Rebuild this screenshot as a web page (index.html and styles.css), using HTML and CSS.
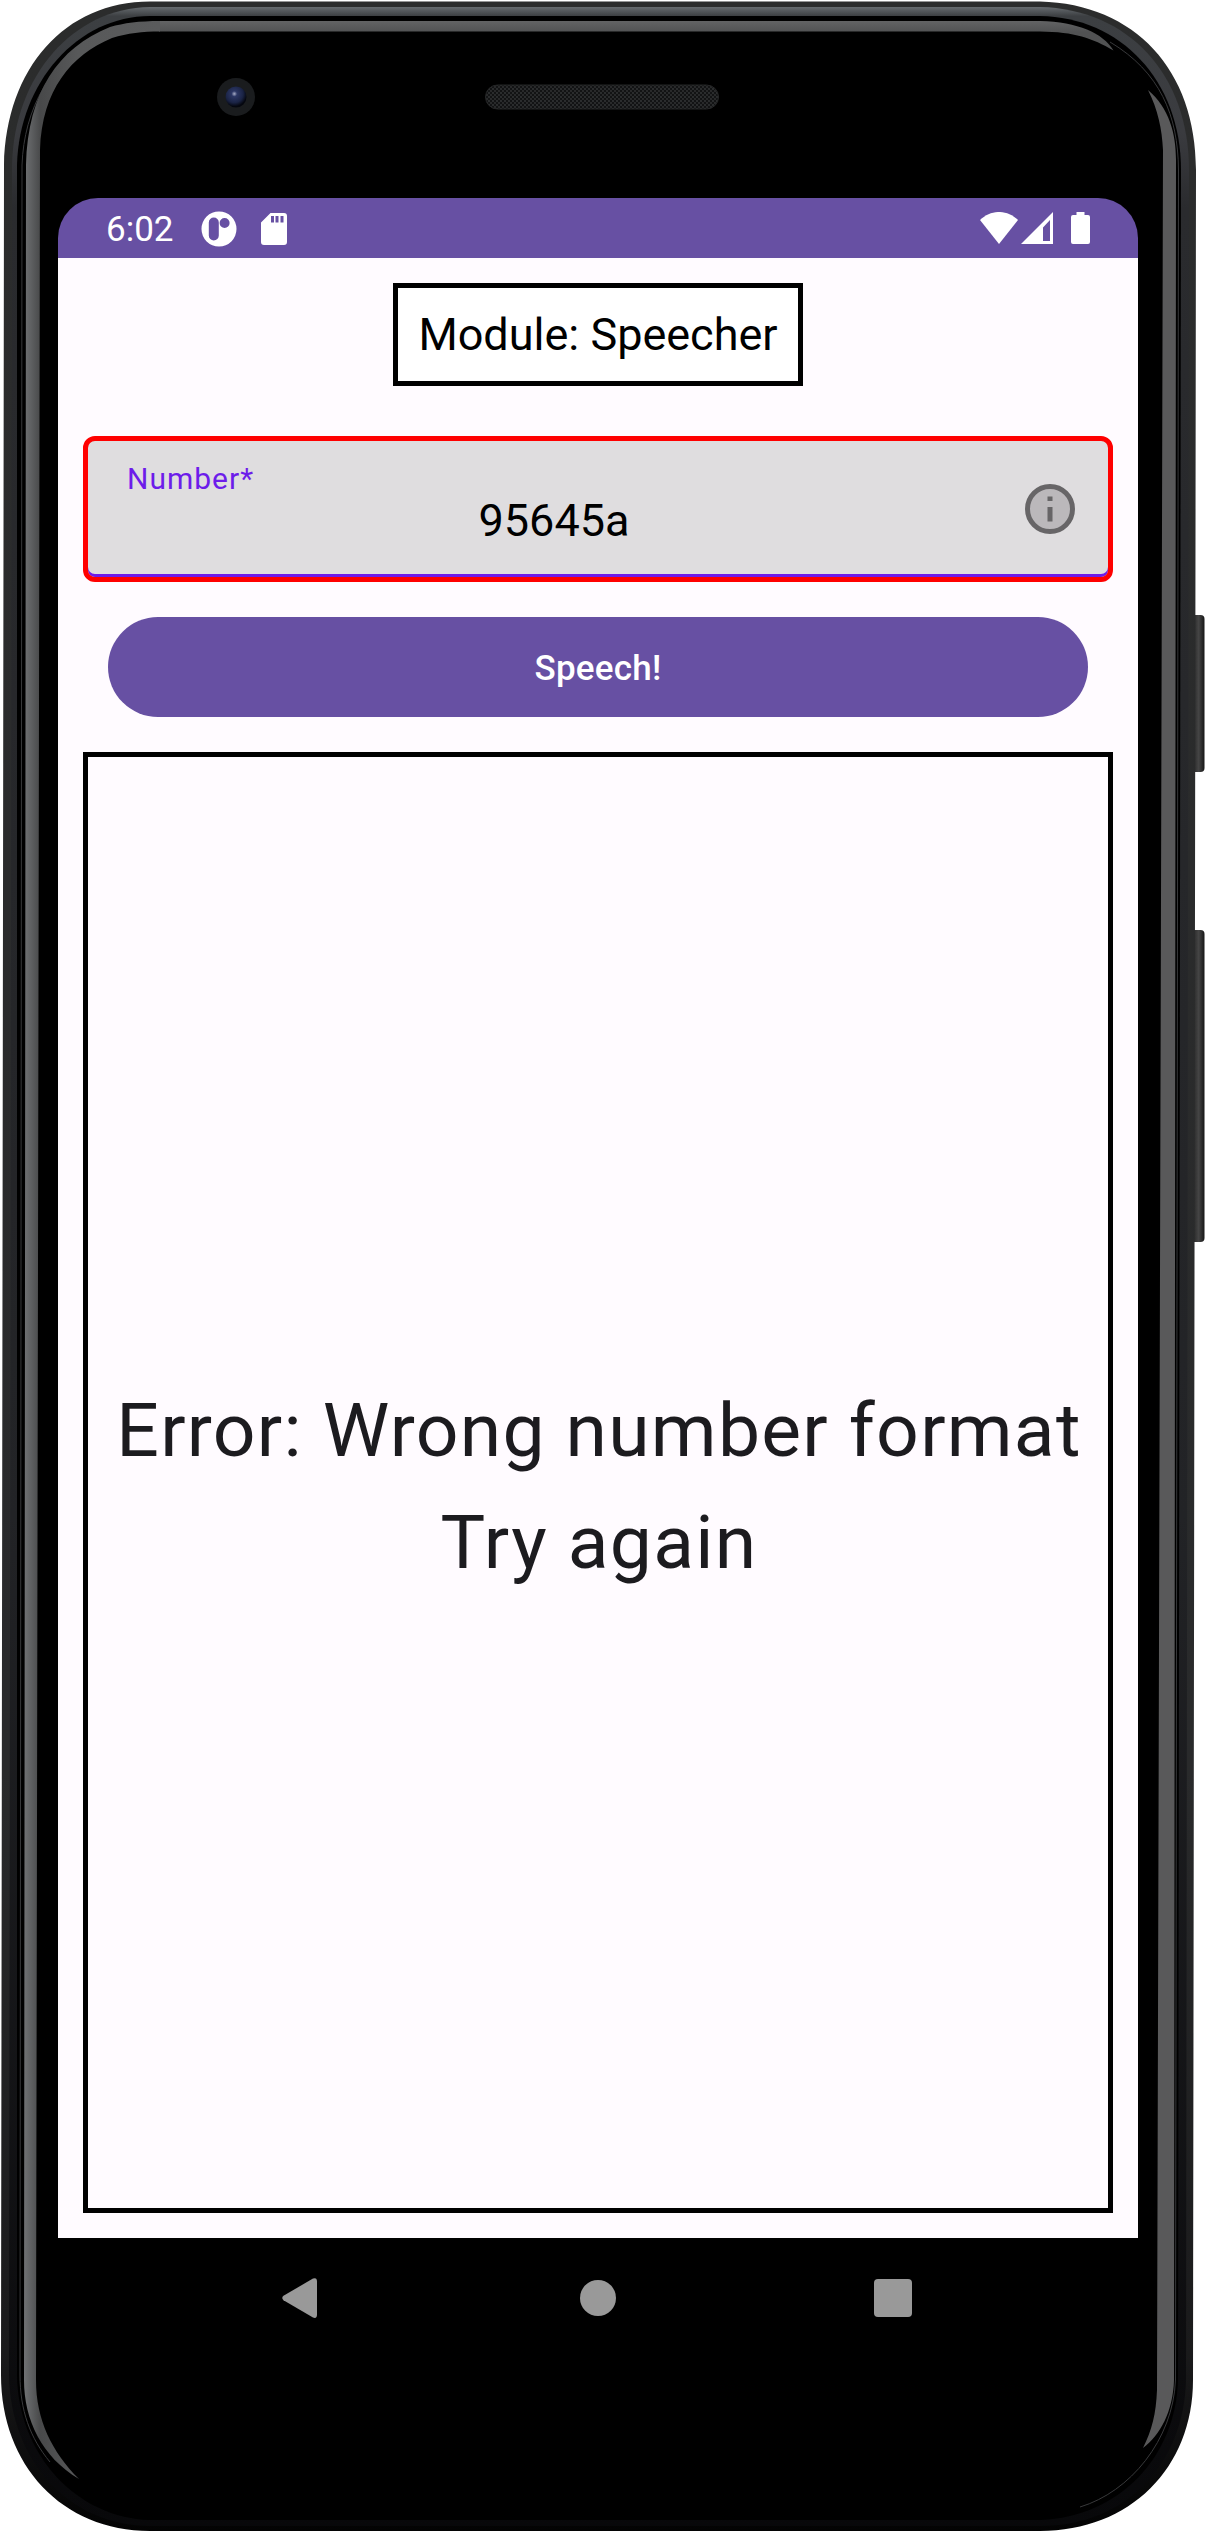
FILE: index.html
```html
<!DOCTYPE html>
<html lang="en">
<head>
<meta charset="utf-8">
<title>Module: Speecher</title>
<link rel="stylesheet" href="styles.css">
</head>
<body>
<main class="phone">
  <svg class="bezel" viewBox="0 0 1206 2533" aria-hidden="true">
    <defs>
      <linearGradient id="rim" x1="0" y1="0" x2="0" y2="1">
        <stop offset="0" stop-color="#2b2c2c"/><stop offset=".7" stop-color="#292a2b"/><stop offset=".93" stop-color="#1a1a1b"/><stop offset="1" stop-color="#030303"/>
      </linearGradient>
      <linearGradient id="band" gradientUnits="userSpaceOnUse" x1="0" y1="6" x2="0" y2="2525">
        <stop offset="0" stop-color="#6b7074"/><stop offset=".004" stop-color="#3c3f42"/><stop offset=".05" stop-color="#3a3b3f"/><stop offset=".08" stop-color="#2a2b2e"/><stop offset=".6" stop-color="#222326"/><stop offset="1" stop-color="#08080a"/>
      </linearGradient>
      <linearGradient id="shineL" gradientUnits="userSpaceOnUse" x1="24" y1="0" x2="160" y2="0">
        <stop offset="0" stop-color="#707274"/><stop offset=".12" stop-color="#48494a"/><stop offset=".4" stop-color="#58595a"/><stop offset="1" stop-color="#5a5b5c"/>
      </linearGradient>
      <linearGradient id="shineT" gradientUnits="userSpaceOnUse" x1="0" y1="20" x2="0" y2="32">
        <stop offset="0" stop-color="#646566"/><stop offset="1" stop-color="#515253"/>
      </linearGradient>
      <linearGradient id="key" x1="0" y1="0" x2="1" y2="0">
        <stop offset="0" stop-color="#171717"/><stop offset=".6" stop-color="#454545"/><stop offset="1" stop-color="#161616"/>
      </linearGradient>
      <radialGradient id="lens" cx=".42" cy=".35" r=".6">
        <stop offset="0" stop-color="#a9aec8"/><stop offset=".22" stop-color="#2c3765"/><stop offset=".7" stop-color="#1a2344"/><stop offset="1" stop-color="#05070f"/>
      </radialGradient>
      <pattern id="mesh" width="4" height="4" patternUnits="userSpaceOnUse">
        <rect width="4" height="4" fill="#121314"/><circle cx="1" cy="1" r=".9" fill="#363839"/><circle cx="3" cy="3" r=".9" fill="#323334"/>
      </pattern>
    </defs>
    <rect x="1190" y="615" width="14.5" height="157" rx="4" fill="url(#key)"/>
    <rect x="1190" y="930" width="14.5" height="312" rx="4" fill="url(#key)"/>
    <path fill="url(#rim)" d="M150 1.500H1040C1135 4 1196 70 1196 170L1193 2380C1193 2468 1130 2531 1040 2531H150C62 2531 1 2465 1 2375L4 165C6 68 65 1.500 150 1.500Z"/>
    <path fill="url(#band)" d="M150 7H1040C1128 9 1189 74 1189 170L1186 2380C1184 2464 1126 2526 1040 2526H150C69 2526 10 2460 9 2375L12 165C14 76 73 8 150 7Z"/>
    <path d="M150 16H1040C1120 17 1181 80 1181 170L1178 2380C1176 2456 1120 2517 1040 2520H150C76 2518 18 2454 17 2375L17 165C19 82 78 16 150 16Z"/>
    <path fill="none" stroke="#38393b" stroke-width="1" d="M1110 42C1160 72 1178 115 1178.500 170L1175.500 2380C1173 2440 1130 2492 1080 2507M50 2462C30 2438 20 2410 20 2375L22 165C24 110 50 58 105 32"/>
    <path fill="url(#shineT)" d="M159 21H1040C1078 22 1103 33 1113.500 50.500C1092 38 1075 32 1040 31.500H159Z"/>
    <path fill="url(#shineL)" d="M110 27C58 48 28 92 26 165L24 2380C24 2420 42 2457 79 2479C52 2452 36 2420 36 2380L40 150C42 90 71 55 112 38C128 33 142 31.500 160 31.500V21C139 21 124 23 110 27Z"/>
    <path fill="#59595a" d="M1148 90C1169 108 1176 133 1176 160L1174 2380C1173 2412 1160 2435 1143 2448C1152 2430 1156 2414 1157 2390L1163 150C1162 129 1158 110 1148 90Z"/>
    <circle cx="236" cy="97" r="19" fill="#1a1c1e"/>
    <circle cx="236" cy="97" r="10.500" fill="url(#lens)"/>
    <rect x="485.500" y="85" width="233" height="24" rx="12" fill="url(#mesh)" stroke="#252627"/>
  </svg>

  <div class="screen">
    <header class="status">
      <span class="clock">6:02</span>
      <svg class="status-app" width="36" height="36" viewBox="0 0 36 36"><path fill="#fff" fill-rule="evenodd" d="M18 .5a17.500 17.500 0 1 0 0 35a17.500 17.500 0 1 0 0-35ZM12.800 6.500a5 5 0 0 1 5 5V24.500a5 5 0 0 1-10 0V11.500a5 5 0 0 1 5-5ZM23.600 7a5 5 0 1 1 0 10a5 5 0 1 1 0-10Z"/></svg>
      <svg class="status-sd" width="26" height="32" viewBox="0 0 26 32"><path fill="#fff" fill-rule="evenodd" d="M9.500 0H23a3 3 0 0 1 3 3V29a3 3 0 0 1-3 3H3a3 3 0 0 1-3-3V9.500ZM10 3V9.500H13V3ZM14.500 3V9.500H17.500V3ZM19.500 3V9.500H22.500V3Z"/></svg>
      <span class="spacer"></span>
      <svg class="status-wifi" width="38" height="32" viewBox="0 0 38 32"><path fill="#fff" d="M0 8C11-2.700 27-2.700 38 8L19 32Z"/></svg>
      <svg class="status-signal" width="32" height="32" viewBox="0 0 32 32"><path fill="#fff" fill-rule="evenodd" d="M32 0V32H0ZM29 8L22 15.500V29H29Z"/></svg>
      <svg class="status-battery" width="19" height="32" viewBox="0 0 19 32"><path fill="#fff" d="M5.500 0H13.500V3H17a2 2 0 0 1 2 2V30a2 2 0 0 1-2 2H2a2 2 0 0 1-2-2V5a2 2 0 0 1 2-2H5.500Z"/></svg>
    </header>

    <section class="app">
      <h1 class="title">Module: Speecher</h1>
      <div class="field">
        <div class="field-text">
          <label class="field-label">Number*</label>
          <span class="field-value">95645a</span>
        </div>
        <svg class="info" width="50" height="50" viewBox="0 0 50 50"><circle cx="25" cy="25" r="22.500" fill="#bbb8bb" stroke="#676567" stroke-width="5"/><path fill="#676567" d="M22.500 12.500h5v4.500h-5ZM22.500 23h5v14.500h-5Z"/></svg>
      </div>
      <button class="action" type="button">Speech!</button>
      <div class="output"><p class="message">Error: Wrong number format<br>Try again</p></div>
    </section>

    <nav class="navbar">
      <svg class="nav-back" width="36" height="40" viewBox="0 0 36 40"><path fill="#999" d="M1.500 17.800L31 .5Q35 -1 35 3.500V36.500Q35 41 31 39.500L1.500 22.200Q-1 20 1.500 17.800Z"/></svg>
      <svg width="38" height="38" viewBox="0 0 38 38"><circle cx="19" cy="19" r="18" fill="#999"/></svg>
      <svg width="38" height="38" viewBox="0 0 38 38"><rect width="38" height="38" rx="4" fill="#999"/></svg>
    </nav>
  </div>
</main>
</body>
</html>
```
FILE: styles.css
```css
* { box-sizing: border-box; }
body { margin: 0; background: #fff; font-family: Roboto, sans-serif; }
svg { display: block; flex: none; }

.phone { position: relative; width: 1206px; height: 2533px; padding: 198px 68px 0 58px; overflow: hidden; }
.bezel { position: absolute; left: 0; top: 0; width: 1206px; height: 2533px; }

.screen { position: relative; width: 1080px; height: 2160px; display: flex; flex-direction: column; border-radius: 40px; overflow: hidden; background: #000; }

.status { height: 60px; display: flex; align-items: center; padding: 0 48px; background: #6750a3; color: #fff; }
.clock { width: 95px; font-size: 35px; line-height: 60px; padding-top: 3px; }
.status-app { margin-top: 1px; }
.status-sd { margin-left: 24px; margin-top: 1px; }
.spacer { flex: 1; }
.status-wifi { margin-bottom: 1px; }
.status-signal { margin-left: 3px; margin-bottom: 1px; }
.status-battery { margin-left: 18px; }

.app { height: 1980px; display: flex; flex-direction: column; padding: 25px; background: #fffbff; }
.title { align-self: center; width: 410px; height: 103px; margin: 0 0 50px; border: 5px solid #000; background: #fff; color: #000; font-size: 45px; font-weight: 400; line-height: 93px; text-align: center; }

.field { height: 146px; display: flex; align-items: center; padding-right: 33px; border: 5px solid red; border-radius: 12px; background: #dfdddf; box-shadow: inset 0 -3px #6d1cea; }
.field-text { flex: 1; display: flex; flex-direction: column; padding: 0 0 11px 39px; }
.field-label { color: #6d1cea; font-size: 30px; line-height: 35px; letter-spacing: 1px; }
.field-value { margin-right: 44px; color: #000; font-size: 45px; line-height: 50px; text-align: center; }

.action { height: 100px; margin: 35px 25px; padding: 4px 0 0; border: 0; border-radius: 50px; background: #6750a3; color: #fff; font: 500 35px/96px Roboto, sans-serif; letter-spacing: .25px; }

.output { flex: 1; display: flex; align-items: center; justify-content: center; border: 5px solid #000; }
.message { margin: 0; padding: 7px 0 0 2px; color: #1c1b1f; font-size: 75px; line-height: 112.5px; letter-spacing: 1.25px; text-align: center; white-space: nowrap; }

.navbar { flex: 1; display: grid; grid-template-columns: repeat(3, 295px); justify-content: center; align-items: center; justify-items: center; }
.nav-back { margin-right: 6px; }
```
